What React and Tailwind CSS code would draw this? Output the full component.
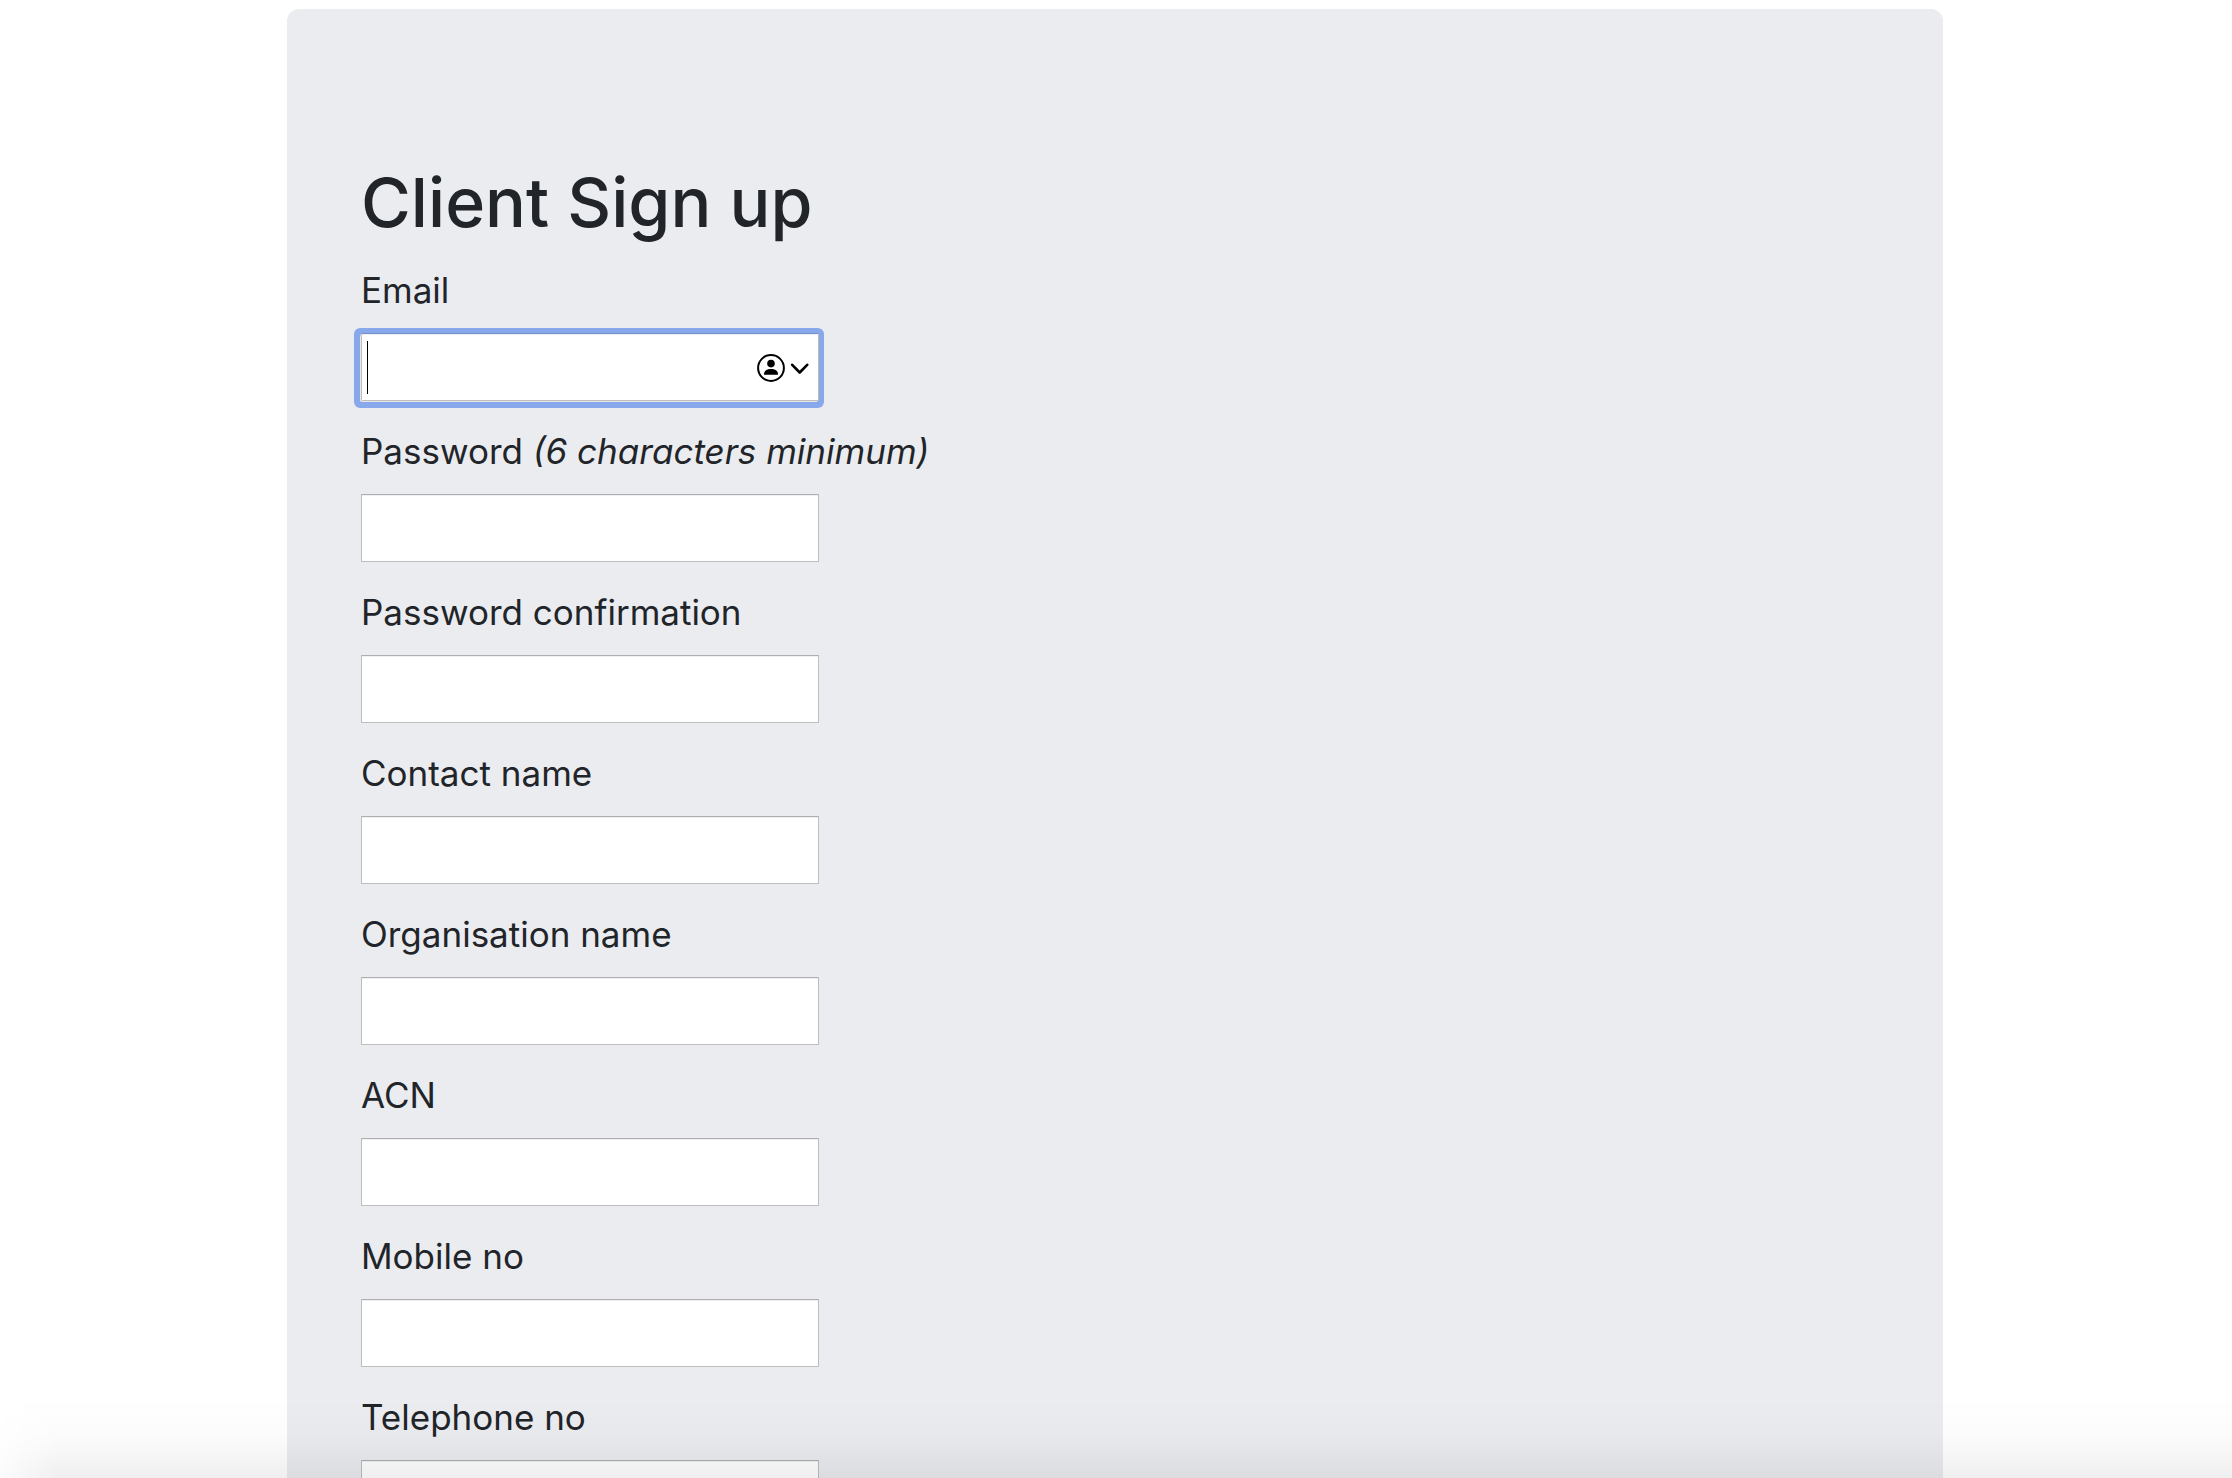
const fields = [
  { id: 'email', label: 'Email', type: 'email', focused: true },
  { id: 'password', label: 'Password', hint: '(6 characters minimum)', type: 'password' },
  { id: 'password_confirmation', label: 'Password confirmation', type: 'password' },
  { id: 'contact_name', label: 'Contact name', type: 'text' },
  { id: 'organisation_name', label: 'Organisation name', type: 'text' },
  { id: 'acn', label: 'ACN', type: 'text' },
  { id: 'mobile_no', label: 'Mobile no', type: 'tel' },
  { id: 'telephone_no', label: 'Telephone no', type: 'tel' },
];

const boxBase = 'flex h-[68px] w-[458px] max-w-full items-center border bg-white';
const boxPlain = 'border-[#bebebe] border-t-[#aeaeb2] shadow-[inset_0_1px_0_#f0f0f0]';
const boxFocused =
  'rounded-[2px] border-[#bebebe] border-t-[#7590cf] pl-[5px] pr-[9px] pt-px shadow-[inset_0_1px_0_#f0f0f0,-1px_1px_0_0_#ebe7e6,-1px_1px_0_6px_#88a8ec]';

function AutofillButton() {
  return (
    <button type="button" aria-label="Autofill contact" className="flex shrink-0">
      <svg width="54" height="30" viewBox="0 0 54 30" fill="none">
        <circle cx="16" cy="15" r="12.9" stroke="#000" strokeWidth="2" />
        <circle cx="16" cy="10.6" r="3.8" fill="#000" />
        <path d="M9 21.2c0-3.5 3-5.2 7-5.2s7 1.7 7 5.2c0 .4-.3.6-.8.6H9.8c-.5 0-.8-.2-.8-.6z" fill="#000" />
        <path d="M37.200 11.800l7.500 7.700 7.500-7.700" stroke="#000" strokeWidth="2.600" strokeLinecap="round" strokeLinejoin="round" />
      </svg>
    </button>
  );
}

function Field({ id, label, hint, type, focused }) {
  return (
    <div className="flex flex-col items-start gap-4">
      <label htmlFor={id} className="text-[35px] leading-[54px]">
        {label}
        {hint && <em> {hint}</em>}
      </label>
      <div className={`${boxBase} ${focused ? boxFocused : boxPlain}`}>
        {focused && <span className="h-[53px] w-px shrink-0 bg-black" />}
        <input
          id={id}
          name={id}
          type={type}
          className="h-full min-w-0 flex-1 bg-transparent px-1 text-2xl caret-transparent outline-none"
        />
        {focused && <AutofillButton />}
      </div>
    </div>
  );
}

export default function App() {
  return (
    <div className="relative h-screen overflow-hidden bg-white pr-0.5 pt-[9px] font-['Inter',sans-serif] text-[#212529]">
      <main className="mx-auto flex min-h-full max-w-[1656px] flex-col gap-[18px] rounded-xl bg-[#ebecf0] px-[74px] pb-[150px] pt-[150px]">
        <h1 className="text-[68px] font-medium leading-[86px]">Client Sign up</h1>
        <form className="flex flex-col gap-[23px]">
          {fields.map((f) => (
            <Field key={f.id} {...f} />
          ))}
        </form>
      </main>
      <div className="pointer-events-none absolute inset-x-0 bottom-0 h-20 bg-linear-to-b from-black/0 via-black/[0.015] to-black/[0.065] [mask-image:linear-gradient(to_right,rgba(0,0,0,0.2),black_60px)]" />
    </div>
  );
}
